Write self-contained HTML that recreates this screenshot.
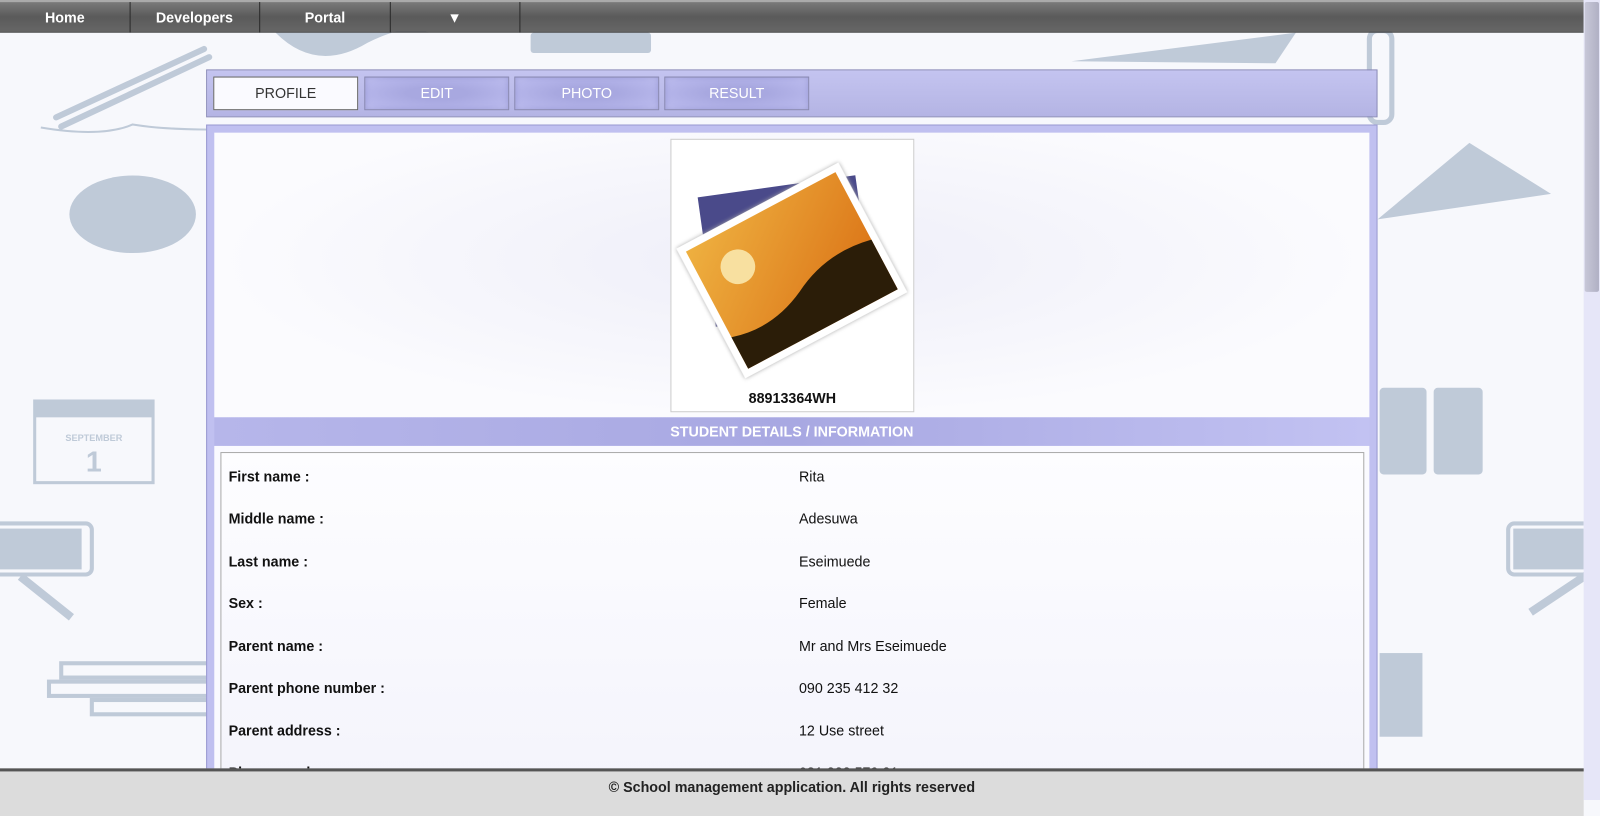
<!DOCTYPE html>
<html><head><meta charset="utf-8"><style>
*{margin:0;padding:0;box-sizing:border-box}
html,body{width:1600px;height:800px;overflow:hidden;background:#f7f8fc}
body{font-family:"Liberation Sans",Arial,sans-serif}
#w{position:absolute;left:0;top:0;width:1568px;height:784px;transform:scale(1.020408);transform-origin:0 0}
.abs{position:absolute}
.nav{left:0;top:0;width:1552px;height:32px;background:linear-gradient(#7a7a7a,#5a5a5a 50%,#666);border-top:2px solid #aaa;border-bottom:1px solid #333}
.nav div{position:absolute;top:0;height:30px;width:128px;border-right:1px solid #2a2a2a;color:#fff;font-weight:bold;font-size:14px;text-align:center;line-height:30px}
.sb{left:1552px;top:0;width:16px;height:784px;background:#e6e6f8}
.thumb{left:1553px;top:2px;width:14px;height:284px;background:linear-gradient(90deg,#c8c8d8,#b0b0c4);border-radius:2px}
.tabbar{left:202px;top:68px;width:1148px;height:47px;background:linear-gradient(#c4c4f0,#b4b4e4);border:1px solid #8a8ab8}
.tab{top:75px;height:33px;width:142px;font-size:14px;text-align:center;line-height:31px;color:#fff;background:radial-gradient(ellipse at center,#a8a8e0 30%,#b8b8ec 80%,#c8c8f4);border:1px solid #8888b0;box-shadow:inset 0 0 6px #9a9ad6}
.panel{left:202px;top:122px;width:1148px;height:640px;background:#c0c0f0;border:1px solid #9a9ad0}
.white{left:210px;top:130px;width:1132px;height:279px;background:radial-gradient(ellipse at 50% 45%,#eeeef8,#fbfbfe 70%)}
.photo{left:657px;top:136px;width:239px;height:268px;background:#fff;border:1px solid #ccc}
.head{left:210px;top:409px;width:1132px;height:28px;background:linear-gradient(90deg,#b6b6ea,#a8a8e2 50%,#c2c2f2);color:#fff;font-weight:bold;font-size:14px;text-align:center;line-height:28px}
.det{left:210px;top:437px;width:1132px;height:330px;background:#fafaff}
.box{left:216px;top:443px;width:1121px;height:330px;background:linear-gradient(#fdfdff,#f4f4fc);border:1px solid #aaa}
.l,.v{position:absolute;font-size:14px;color:#111}
.l{left:224px;font-weight:bold}
.v{left:783px}
.foot{left:0;top:753px;width:1552px;height:47px;background:#dcdcdc;border-top:3px solid #555;text-align:center;font-weight:bold;font-size:14px;line-height:30px;color:#222}
</style></head><body><div id="w">
<svg class="abs" style="left:0;top:0" width="1552" height="784" fill="#bfcad8" stroke="#bfcad8">
<g stroke-width="6" stroke-linecap="round" fill="none"><line x1="55" y1="115" x2="200" y2="48"/><line x1="60" y1="124" x2="205" y2="56"/></g>
<path d="M40 125 q60 10 90 -3 q30 5 80 5" stroke-width="2" fill="none"/>
<ellipse cx="130" cy="210" rx="62" ry="38" stroke="none"/>
<rect x="34" y="393" width="116" height="80" fill="none" stroke-width="3"/><rect x="34" y="393" width="116" height="16" stroke="none"/>
<text x="92" y="432" font-size="9" text-anchor="middle" stroke="none" font-weight="bold" font-family="Liberation Sans">SEPTEMBER</text>
<text x="92" y="462" font-size="28" text-anchor="middle" stroke="none" font-weight="bold" font-family="Liberation Sans">1</text>
<rect x="-10" y="513" width="100" height="50" rx="6" fill="none" stroke-width="4"/><rect x="-5" y="518" width="85" height="40" stroke="none"/>
<path d="M20 565 l50 40" stroke-width="8"/>
<rect x="60" y="650" width="150" height="14" fill="none" stroke-width="4"/><rect x="48" y="668" width="160" height="14" fill="none" stroke-width="4"/><rect x="90" y="686" width="120" height="14" fill="none" stroke-width="4"/>
<path d="M270 32 q40 40 90 10 q40 -20 60 -10" stroke="none"/>
<rect x="520" y="32" width="118" height="20" rx="3" stroke="none"/>
<path d="M1050 60 l220 -28 l-20 30 z" stroke="none"/>
<rect x="1342" y="30" width="22" height="90" rx="8" fill="none" stroke-width="5"/>
<path d="M1350 215 l90 -75 l80 50 z" stroke="none"/>
<rect x="1352" y="380" width="46" height="85" rx="4" stroke="none"/><rect x="1405" y="380" width="48" height="85" rx="4" stroke="none"/>
<rect x="1478" y="513" width="100" height="50" rx="6" fill="none" stroke-width="4"/><rect x="1483" y="518" width="100" height="40" stroke="none"/>
<path d="M1500 600 l60 -40" stroke-width="8"/>
<rect x="1352" y="640" width="42" height="82" stroke="none"/>
</svg>
<div class="abs nav">
<div style="left:0">Home</div><div style="left:127px">Developers</div><div style="left:255px">Portal</div><div style="left:382px">▼</div>
</div>
<div class="abs sb"></div><div class="abs thumb"></div>
<div class="abs tabbar"></div>
<div class="abs tab" style="left:209px;background:#fafaff;color:#333;border-color:#666;box-shadow:none">PROFILE</div>
<div class="abs tab" style="left:357px">EDIT</div>
<div class="abs tab" style="left:504px">PHOTO</div>
<div class="abs tab" style="left:651px">RESULT</div>
<div class="abs panel"></div>
<div class="abs white"></div>
<div class="abs photo">
<svg width="237" height="240" style="position:absolute;left:0;top:0">
<defs><linearGradient id="o" x1="0" y1="0" x2="1" y2="1"><stop offset="0" stop-color="#eeb040"/><stop offset="1" stop-color="#d86a10"/></linearGradient></defs>
<g transform="translate(112 110) rotate(-8)"><rect x="-85" y="-72" width="170" height="140" fill="#fff"/><rect x="-78" y="-65" width="156" height="128" fill="#4a4a8a"/></g>
<g transform="translate(118 128) rotate(-28)"><rect x="-90" y="-72" width="180" height="144" fill="#fff" style="filter:drop-shadow(0 0 2px #aaa)"/><rect x="-83" y="-65" width="166" height="130" fill="url(#o)"/>
<path d="M-83 30 q40 12 80 -8 q40 -22 86 -12 v55 h-166z" fill="#2b1d08"/>
<circle cx="-45" cy="-28" r="17" fill="#f8e0a0"/></g>
</svg>
<div style="position:absolute;top:245px;width:100%;text-align:center;font-weight:bold;font-size:14px;color:#111">88913364WH</div>
</div>
<div class="abs head">STUDENT DETAILS / INFORMATION</div>
<div class="abs det"></div>
<div class="abs box"></div>
<div class="l" style="top:459px">First name :</div><div class="v" style="top:459px">Rita</div>
<div class="l" style="top:500px">Middle name :</div><div class="v" style="top:500px">Adesuwa</div>
<div class="l" style="top:542px">Last name :</div><div class="v" style="top:542px">Eseimuede</div>
<div class="l" style="top:583px">Sex :</div><div class="v" style="top:583px">Female</div>
<div class="l" style="top:625px">Parent name :</div><div class="v" style="top:625px">Mr and Mrs Eseimuede</div>
<div class="l" style="top:666px">Parent phone number :</div><div class="v" style="top:666px">090 235 412 32</div>
<div class="l" style="top:708px">Parent address :</div><div class="v" style="top:708px">12 Use street</div>
<div class="l" style="top:749px">Phone number :</div><div class="v" style="top:749px">081 222 579 21</div>
<div class="abs foot">© School management application. All rights reserved</div>
</div></body></html>
